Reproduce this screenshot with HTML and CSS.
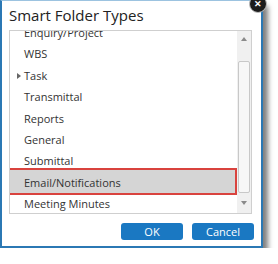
FILE: index.html
```html
<!DOCTYPE html>
<html lang="en">
<head>
    <meta charset="UTF-8">
    <title>Smart Folder Types</title>
    <link rel="stylesheet" href="styles.css">
</head>
<body>
    <div class="dialog">
        <span class="close">&#x2715;</span>
        <h1 class="title">Smart Folder Types</h1>
        <div class="listbox">
            <ul class="items">
                <li>Enquiry/Project</li>
                <li>WBS</li>
                <li class="has-children">Task</li>
                <li>Transmittal</li>
                <li>Reports</li>
                <li>General</li>
                <li>Submittal</li>
                <li class="selected"><span>Email/Notifications</span></li>
                <li>Meeting Minutes</li>
            </ul>
            <div class="scrollbar">
                <span class="arrow up"></span>
                <span class="thumb"></span>
                <span class="arrow down"></span>
            </div>
        </div>
        <div class="actions">
            <button class="btn">OK</button>
            <button class="btn">Cancel</button>
        </div>
    </div>
</body>
</html>
```

FILE: styles.css
```css
body {
    margin: 0;
    background: #fff;
    font-family: "Open Sans", "Liberation Sans", sans-serif;
    color: #333;
}
.dialog {
    position: relative;
    width: 259px;
    height: 245px;
    background: #fff;
    border: 2px solid #2b78b4;
    border-top: 1px solid #9cc3e0;
    box-shadow: 5px 6px 5px rgba(0, 0, 0, 0.5);
}
.close {
    position: absolute;
    right: -6px;
    top: -6px;
    width: 16px;
    height: 16px;
    border-radius: 50%;
    background: #1c1c1c;
    border: 1px solid #bbb;
    color: #fff;
    font-size: 9px;
    font-weight: bold;
    line-height: 16px;
    text-align: center;
}
.title {
    margin: 0;
    padding: 4px 0 0 7px;
    font-size: 15px;
    font-weight: normal;
    line-height: 20px;
    color: #222;
}
.listbox {
    display: flex;
    margin: 5px 0 0 7px;
    width: 241px;
    height: 182px;
    border: 1px solid #cfcfcf;
    overflow: hidden;
}
.items {
    flex: 1;
    list-style: none;
    margin: -9px 0 0 0;
    padding: 0;
    font-size: 11px;
}
.items li {
    position: relative;
    height: 21.4px;
    line-height: 21.4px;
    padding-left: 14px;
}
.has-children::before {
    content: "";
    position: absolute;
    left: 7px;
    top: 8px;
    border-left: 4px solid #666;
    border-top: 3px solid transparent;
    border-bottom: 3px solid transparent;
}
.selected::before {
    content: "";
    position: absolute;
    left: -2px;
    right: 0;
    top: -4px;
    bottom: -2px;
    background: #d5d5d5;
    border: 2px solid #d9433e;
}
.selected span {
    position: relative;
}
.scrollbar {
    display: flex;
    flex-direction: column;
    align-items: center;
    width: 14px;
    background: #f0f0f0;
}
.arrow {
    width: 0;
    height: 0;
    border-left: 3px solid transparent;
    border-right: 3px solid transparent;
}
.arrow.up {
    margin: 6px 0 20px;
    border-bottom: 4px solid #8a8a8a;
}
.arrow.down {
    margin-top: 8px;
    border-top: 4px solid #8a8a8a;
}
.thumb {
    width: 10px;
    height: 130px;
    background: #f7f7f7;
    border: 1px solid #c8c8c8;
    border-radius: 2px;
}
.actions {
    display: flex;
    justify-content: flex-end;
    gap: 9px;
    padding: 9px 7px 0 0;
}
.btn {
    width: 62px;
    height: 17px;
    padding: 0;
    border: none;
    border-radius: 3px;
    background: #1a78c2;
    color: #fff;
    font-family: "Open Sans", "Liberation Sans", sans-serif;
    font-size: 11px;
}
```
